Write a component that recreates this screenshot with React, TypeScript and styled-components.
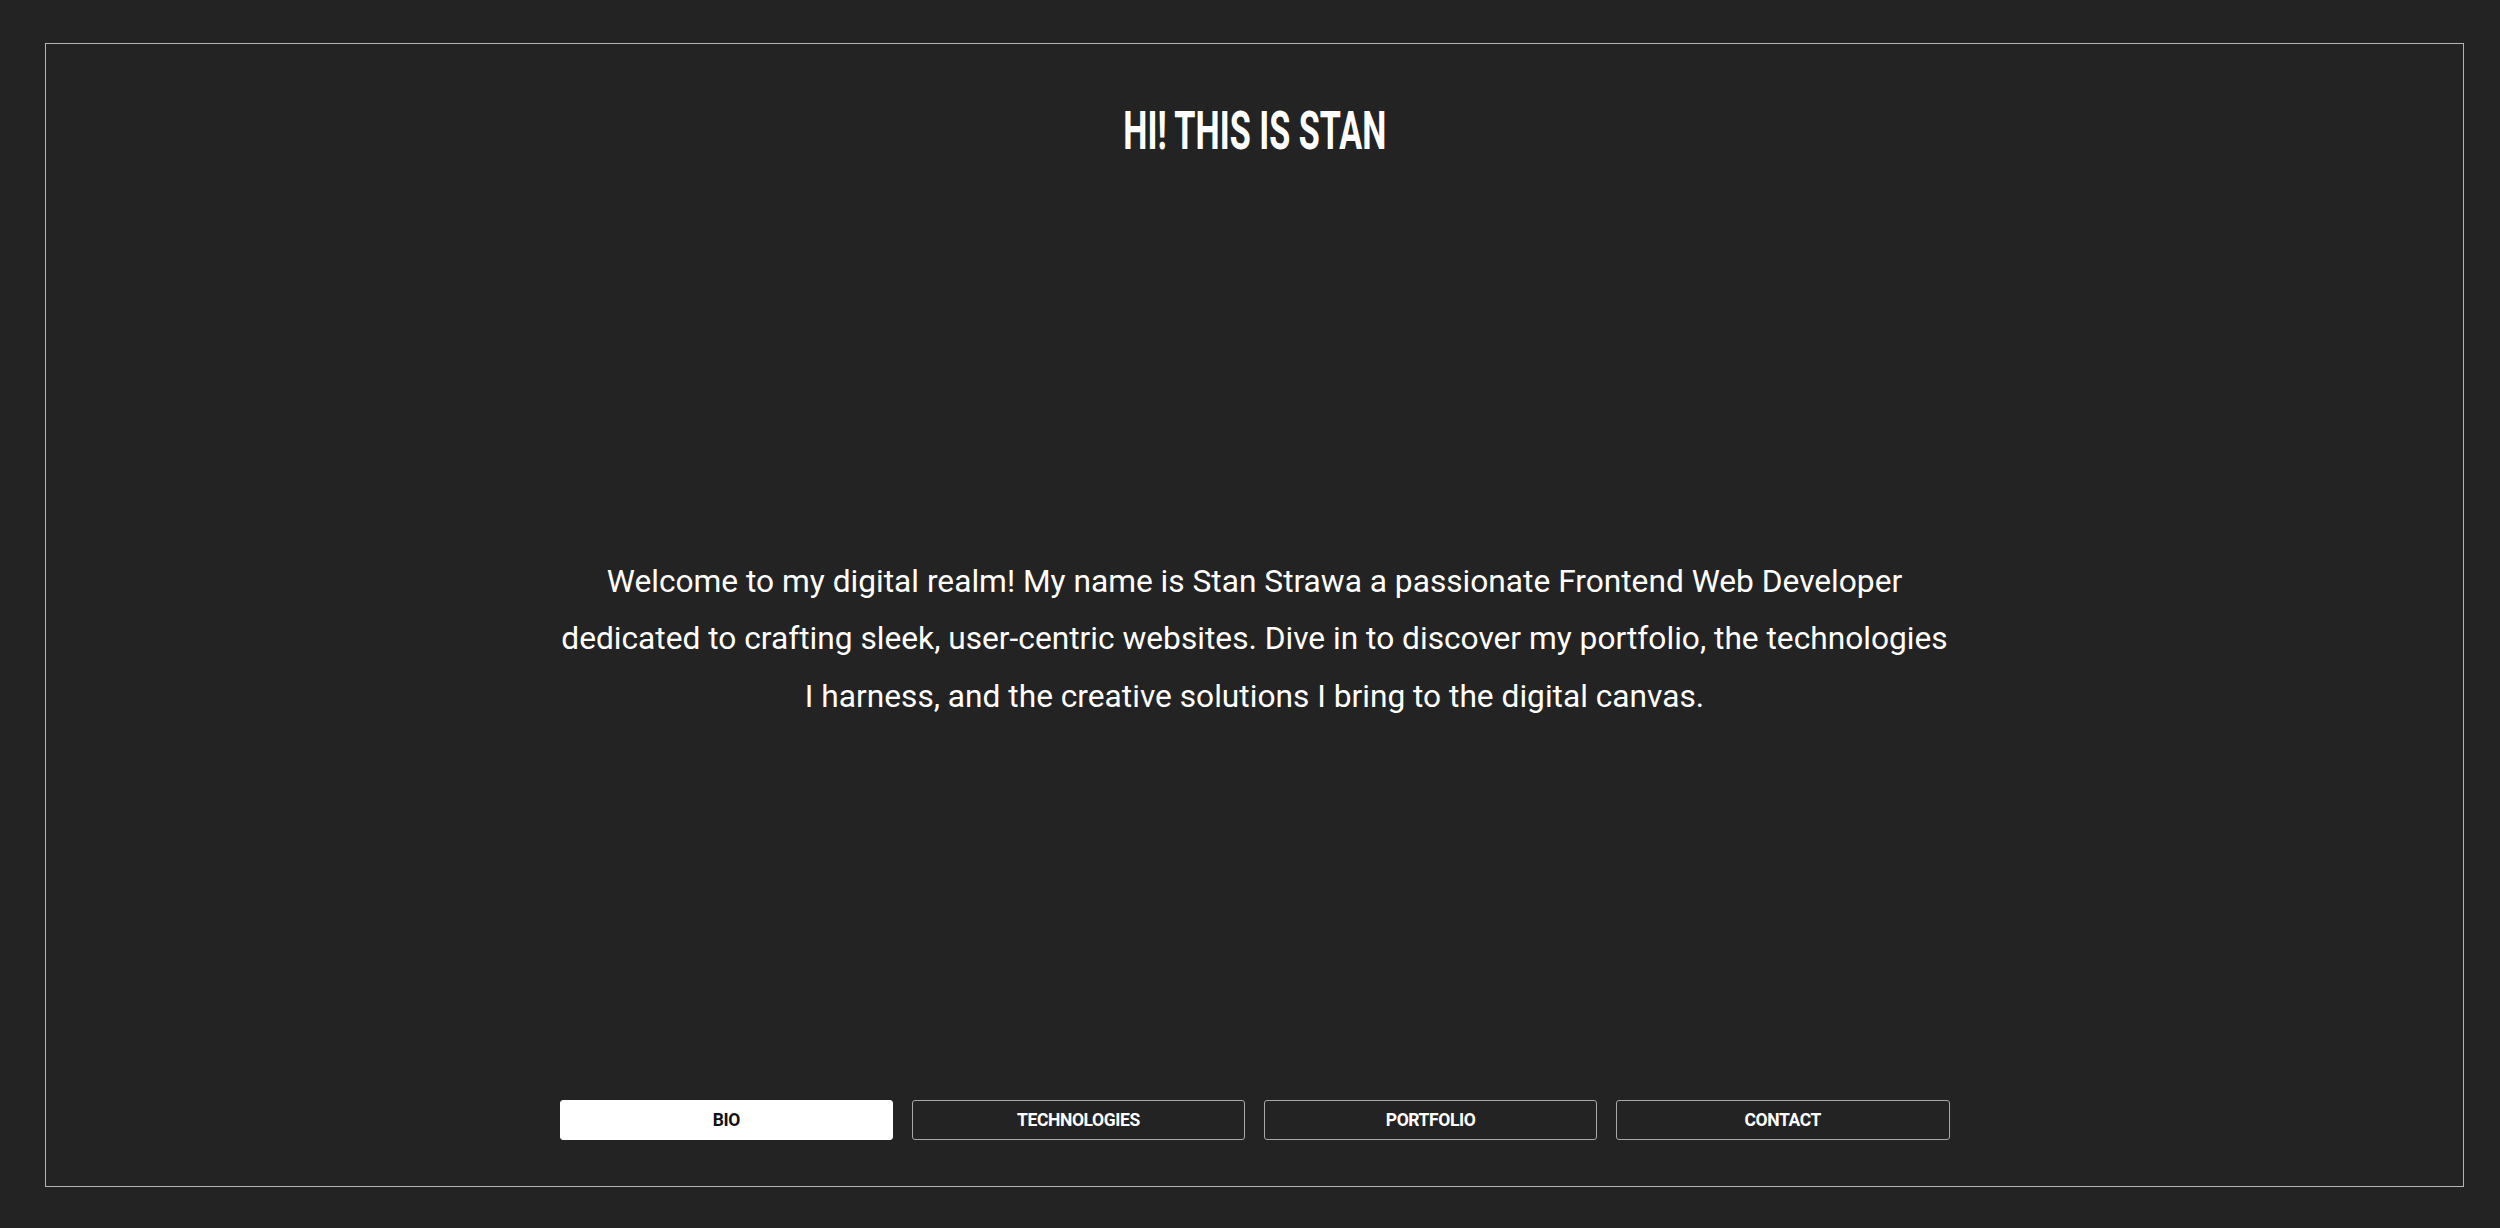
import React from "react";
import styled, { createGlobalStyle } from "styled-components";

const GlobalStyle = createGlobalStyle`
  html, body {
    margin: 0;
    padding: 0;
    background: #232323;
    font-family: Roboto, "Liberation Sans", sans-serif;
    color: #ffffff;
  }
  * { box-sizing: border-box; }
`;

const Frame = styled.div`
  margin: 43px 36px 41px 45px;
  height: 1144px;
  border: 1px solid #b4b4b4;
  display: flex;
  flex-direction: column;
  align-items: center;
  padding: 61px 0 46px;
`;

const TitleWrap = styled.h1`
  margin: 0;
  height: 52px;
  font-size: 53px;
  line-height: 1;
  font-weight: 700;
  font-family: Roboto, "Liberation Sans", sans-serif;
  color: #ffffff;
  text-align: center;
`;

const TitleText = styled.span`
  display: inline-block;
  white-space: nowrap;
  transform: scaleX(0.645);
  transform-origin: center;
`;

const Main = styled.main`
  flex: 1;
  display: flex;
  align-items: center;
  justify-content: center;
  padding-top: 21px;
  width: 1392px;
`;

const Intro = styled.p`
  margin: 0;
  font-size: 31.7px;
  line-height: 57.5px;
  font-weight: 400;
  text-align: center;
  color: #ffffff;
`;

const Nav = styled.nav`
  display: grid;
  grid-template-columns: repeat(4, 1fr);
  gap: 18.5px;
  width: 1390px;
`;

const NavButton = styled.button<{ $active?: boolean }>`
  height: 40px;
  border: 1px solid ${(p) => (p.$active ? "#ffffff" : "#a8a8a8")};
  border-radius: 3px;
  background: ${(p) => (p.$active ? "#ffffff" : "#232323")};
  color: ${(p) => (p.$active ? "#111111" : "#ffffff")};
  font-family: Roboto, "Liberation Sans", sans-serif;
  font-weight: 700;
  font-size: 17.5px;
  letter-spacing: -0.4px;
  text-transform: uppercase;
  cursor: pointer;
  padding: 0;
`;

const items = ["Bio", "Technologies", "Portfolio", "Contact"];

export default function App() {
  return (
    <>
      <GlobalStyle />
      <Frame>
        <TitleWrap>
          <TitleText>HI! THIS IS STAN</TitleText>
        </TitleWrap>
        <Main>
          <Intro>
            Welcome to my digital realm! My name is Stan Strawa a passionate Frontend Web Developer
            dedicated to crafting sleek, user-centric websites. Dive in to discover my portfolio, the
            technologies I harness, and the creative solutions I bring to the digital canvas.
          </Intro>
        </Main>
        <Nav>
          {items.map((it, i) => (
            <NavButton key={it} $active={i === 0}>
              {it}
            </NavButton>
          ))}
        </Nav>
      </Frame>
    </>
  );
}
